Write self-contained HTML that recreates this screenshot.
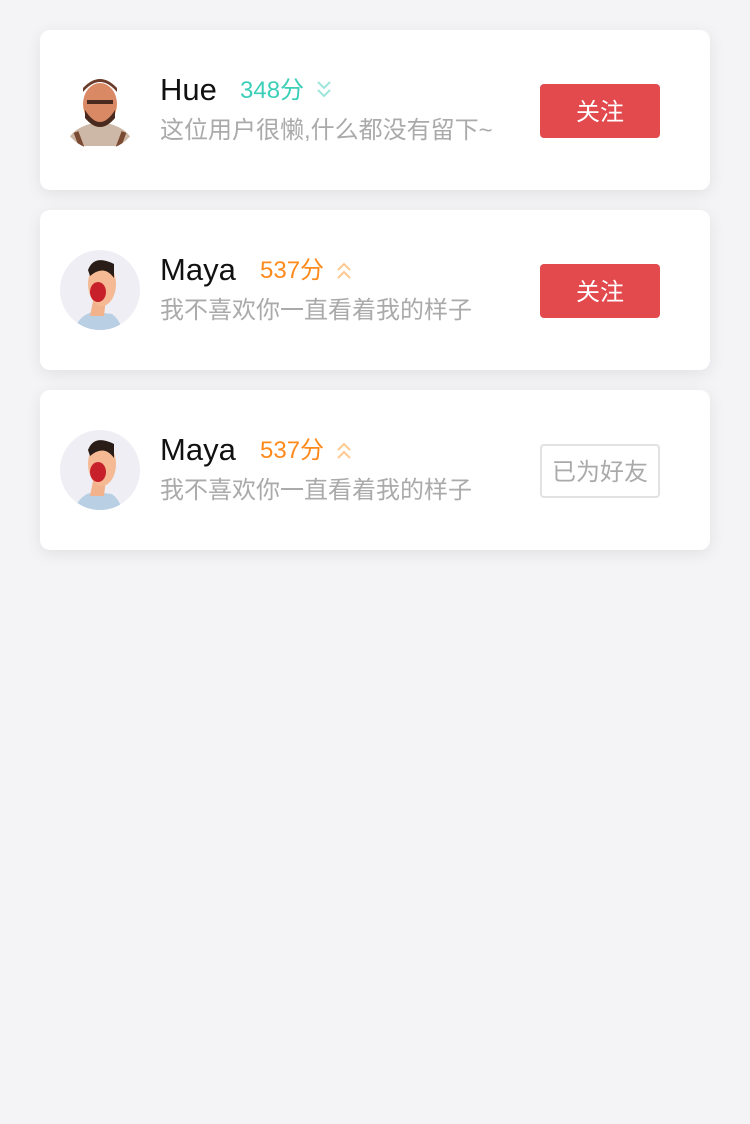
<!DOCTYPE html>
<html><head><meta charset="utf-8"><style>
*{margin:0;padding:0;box-sizing:border-box}
body{width:750px;height:1124px;background:#f4f4f6;font-family:"Liberation Sans","Noto Sans CJK SC",sans-serif;position:relative;overflow:hidden}
.card{position:absolute;left:40px;width:670px;height:160px;background:#fff;border-radius:10px;box-shadow:0 4px 16px rgba(0,0,0,0.08)}
.av{position:absolute;left:20px;top:40px;width:80px;height:80px;border-radius:50%;overflow:hidden}
.name{position:absolute;left:120px;top:40px;font-size:31px;color:#111;line-height:40px}
.score{position:absolute;top:45px;font-size:24px;line-height:32px}
.ic{position:absolute;top:48px}
.bio{position:absolute;left:120px;top:84px;font-size:24px;color:#aaa;line-height:34px;white-space:nowrap}
.btn{position:absolute;left:500px;top:54px;width:120px;height:54px;border-radius:4px;background:#e24a4d;color:#fff;font-size:24px;text-align:center;line-height:58px}
.btn.f{background:#fff;border:2px solid #e2e2e2;color:#aaa;line-height:54px}
</style></head><body>

<div class="card" style="top:30px">
 <div class="av" style="background:#fff"><svg width="80" height="80" viewBox="0 0 80 80">
  <path d="M6 76 Q10 56 40 52 Q70 56 74 76 Z" fill="#cdb7a6"/>
  <path d="M16 62 L22 78 M64 62 L58 78" stroke="#7b4a32" stroke-width="5"/>
  <ellipse cx="40" cy="34" rx="17" ry="21" fill="#d98a65"/>
  <path d="M23 22 Q40 2 57 22 L57 18 Q40 0 23 18Z" fill="#6b3c2a"/>
  <path d="M25 40 Q40 64 55 40 L55 48 Q40 66 25 48Z" fill="#4a2a1e"/>
  <rect x="27" y="30" width="26" height="4" fill="#4a2a1e"/>
 </svg></div>
 <div class="name">Hue</div>
 <div class="score" style="left:200px;color:#3ccfb8">348分</div>
 <svg class="ic" style="left:276px" width="16" height="24" viewBox="0 0 16 24"><path d="M2 4 L8 10 L14 4 M2 12 L8 18 L14 12" stroke="#9fe6da" stroke-width="2" fill="none"/></svg>
 <div class="bio">这位用户很懒,什么都没有留下~</div>
 <div class="btn">关注</div>
</div>

<div class="card" style="top:210px">
 <div class="av" style="background:#eeeef4"><svg width="80" height="80" viewBox="0 0 80 80">
  <path d="M14 80 Q20 64 34 62 L52 64 Q60 70 62 80Z" fill="#b9cfe4"/>
  <path d="M30 66 L34 46 L46 48 L44 66Z" fill="#f2b28c"/>
  <ellipse cx="42" cy="34" rx="14" ry="22" fill="#f5b994"/>
  <path d="M28 20 Q34 4 54 14 L54 28 Q44 14 30 26Z" fill="#2a1d18"/>
  <ellipse cx="38" cy="42" rx="8" ry="10" fill="#c8202a"/>
 </svg></div>
 <div class="name">Maya</div>
 <div class="score" style="left:220px;color:#ff8a1c">537分</div>
 <svg class="ic" style="left:296px" width="16" height="24" viewBox="0 0 16 24"><path d="M2 12 L8 6 L14 12 M2 20 L8 14 L14 20" stroke="#ffc98f" stroke-width="2" fill="none"/></svg>
 <div class="bio">我不喜欢你一直看着我的样子</div>
 <div class="btn">关注</div>
</div>

<div class="card" style="top:390px">
 <div class="av" style="background:#eeeef4"><svg width="80" height="80" viewBox="0 0 80 80">
  <path d="M14 80 Q20 64 34 62 L52 64 Q60 70 62 80Z" fill="#b9cfe4"/>
  <path d="M30 66 L34 46 L46 48 L44 66Z" fill="#f2b28c"/>
  <ellipse cx="42" cy="34" rx="14" ry="22" fill="#f5b994"/>
  <path d="M28 20 Q34 4 54 14 L54 28 Q44 14 30 26Z" fill="#2a1d18"/>
  <ellipse cx="38" cy="42" rx="8" ry="10" fill="#c8202a"/>
 </svg></div>
 <div class="name">Maya</div>
 <div class="score" style="left:220px;color:#ff8a1c">537分</div>
 <svg class="ic" style="left:296px" width="16" height="24" viewBox="0 0 16 24"><path d="M2 12 L8 6 L14 12 M2 20 L8 14 L14 20" stroke="#ffc98f" stroke-width="2" fill="none"/></svg>
 <div class="bio">我不喜欢你一直看着我的样子</div>
 <div class="btn f">已为好友</div>
</div>

</body></html>
